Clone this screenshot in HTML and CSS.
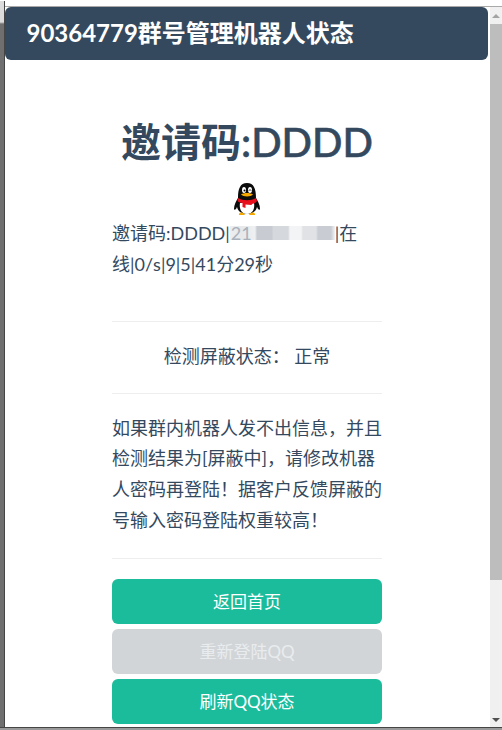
FILE: index.html
```html
<!DOCTYPE html>
<html lang="zh">
<head>
<meta charset="utf-8">
<title>90364779群号管理机器人状态</title>
<link rel="stylesheet" href="styles.css">
</head>
<body>
<div class="stage">
  <div class="topstrip"></div>
  <div class="main">
    <div class="leftstrip"></div>
    <div class="dialog">
      <header class="bar">90364779群号管理机器人状态</header>
      <div class="content">
        <h1 class="title">邀请码<span class="title-code">:DDDD</span></h1>
        <div class="avatar">
          <svg width="28" height="34" viewBox="0 0 28 34" aria-hidden="true">
            <path d="M1 27c0-4 2-8 4-11C5 7 7 1 14 1s9 6 9 15c2 3 4 7 4 11 0 1-1 1-2 0l-1-2c-1 4-4 7-10 7S5 29 4 25l-1 2c-1 1-2 1-2 0z" fill="#0b0b0b"/>
            <path d="M7 21c-1 5 1 11 7 11s8-6 7-11z" fill="#fff"/>
            <path d="M5 16c5 3 13 3 18 0l1 3c-1 2-4 2.500-5 3l-.5 1-6-.5v3.500l-3-1v-4c-2 0-4-1-5-2z" fill="#e8101c"/>
            <ellipse cx="11" cy="8" rx="2" ry="3" fill="#fff"/>
            <ellipse cx="17" cy="8" rx="2" ry="3" fill="#fff"/>
            <circle cx="11.500" cy="8.500" r="1" fill="#000"/>
            <path d="M16 8.500c.5-1 1.500-1 2 0" stroke="#000" fill="none"/>
            <path d="M8 12.500c3-2 9-2 12 0-2 2.500-10 2.500-12 0z" fill="#f5a800"/>
            <path d="M7 31c2-1 4 0 5 2H6c0-1 0-2 1-2zM21 31c-2-1-4 0-5 2h6c0-1 0-2-1-2z" fill="#f5a800"/>
          </svg>
        </div>
        <p class="info">邀请码:DDDD|<span class="mask">21</span>|在线|0/s|9|5|41分29秒</p>
        <hr class="rule rule-first">
        <p class="status">检测屏蔽状态： 正常</p>
        <hr class="rule rule-mid">
        <p class="notice">如果群内机器人发不出信息，并且检测结果为[屏蔽中]，请修改机器人密码再登陆！据客户反馈屏蔽的号输入密码登陆权重较高！</p>
        <hr class="rule rule-last">
        <div class="actions">
          <a class="btn" href="#">返回首页</a>
          <a class="btn btn-disabled" href="#">重新登陆QQ</a>
          <a class="btn" href="#">刷新QQ状态</a>
        </div>
      </div>
    </div>
    <div class="scrollbar">
      <span class="arrow arrow-up"></span>
      <span class="thumb"></span>
      <span class="arrow arrow-down"></span>
    </div>
  </div>
  <div class="bottomstrip"></div>
</div>
</body>
</html>
```

FILE: styles.css
```css
* { box-sizing: border-box; }
html, body { margin: 0; padding: 0; height: 100%; overflow: hidden; }
body { font-family: Lato, "Noto Sans CJK SC", sans-serif; color: #34495e; background: #fff; }

.stage { width: 502px; height: 730px; display: flex; flex-direction: column; overflow: hidden; }

.topstrip { height: 7px; flex: none; background: #fff; border-bottom: 1px solid #a9a9a9; margin-left: 5px; }

.main { flex: 1; min-height: 0; display: flex; margin-top: -1px; padding-top: 1px; }

.leftstrip { width: 5px; flex: none; margin-top: -6px;
  background: linear-gradient(#dcdcdc 0, #dcdcdc 21px, #6f6f6f 23px, #6f6f6f 100%);
  border-right: 1px solid #454545; }

.dialog { width: 485px; flex: none; background: #fff; padding-right: 2px; overflow: hidden; }

.bar { height: 53px; background: #34495e; color: #fff; border-radius: 6px;
  padding-left: 21.5px; font-size: 24px; font-weight: 700; line-height: 52px; }

.content { width: 270px; margin-left: 107px; }

.title { margin: 60px 0 0; text-align: center; font-size: 40px; font-weight: 700; line-height: 44px; white-space: nowrap; }
.title-code { font-weight: 500; -webkit-text-stroke: 0.6px #34495e; }

.avatar { display: flex; justify-content: center; margin: 18px 0 0; height: 34px; padding-right: 1px; }

.info, .status, .notice { margin: 0; font-size: 18px; line-height: 30.6px; }
.info { margin-top: 2px; }
.status { text-align: center; }

.mask { display: inline-block; width: 105px; height: 14px; line-height: 14px;
  color: #a9b1bb; text-indent: 1px;
  background: linear-gradient(90deg, #edeef0 0, #e6e8ea 12px, #eef0f1 25px, #c8ccd2 27px, #c8ccd2 42px, #d5d8dc 43px, #d5d8dc 58px, #f3f4f5 60px, #f3f4f5 71px, #e0e2e5 73px, #e0e2e5 86px, #c9cdd3 88px, #c9cdd3 101px, #f2f3f4 105px); }

.rule { height: 1px; border: 0; background: #eeeeee; }
.rule-first { margin: 42px 0 19px; }
.rule-mid { margin: 21px 0 19px; }
.rule-last { margin: 23px 0 20px; }

.actions { display: flex; flex-direction: column; gap: 5px; }

.btn { display: block; height: 45px; line-height: 45px; text-align: center; color: #fff;
  background: #1abc9c; border-radius: 6px; font-size: 17px; text-decoration: none; }
.btn-disabled { background: #d1d5d8; color: #e9ecee; }

.scrollbar { width: 12px; flex: none; background: #f0f0f0; display: flex; flex-direction: column; align-items: center; padding-top: 7px; }
.arrow { flex: none; width: 0; height: 0; border-left: 4px solid transparent; border-right: 4px solid transparent; }
.arrow-up { border-bottom: 4px solid #a3a3a3; margin-bottom: 6px; }
.thumb { flex: none; align-self: stretch; height: 556px; background: #bdbdbd; }
.arrow-down { border-top: 4px solid #505050; margin-top: 138px; }

.bottomstrip { height: 3px; flex: none; background: #9a9a9a; border-top: 1px solid #454545; }
```
